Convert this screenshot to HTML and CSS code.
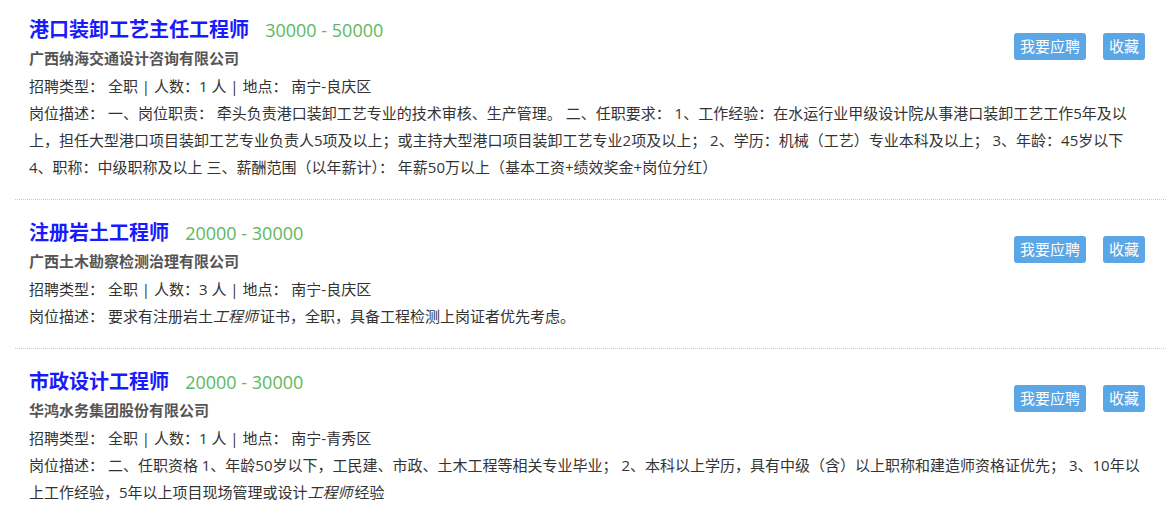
FILE: index.html
```html
<!DOCTYPE html>
<html lang="zh-CN">
<head>
  <meta charset="UTF-8">
  <title>招聘信息</title>
  <meta name="viewport" content="width=device-width, initial-scale=1.0">
  <link rel="stylesheet" href="styles.css">
</head>
<body>

  <main class="job-list">

    <div class="job">
      <div class="job-actions">
        <a class="btn" href="#">我要应聘</a>
        <a class="btn" href="#">收藏</a>
      </div>
      <h2 class="job-title">港口装卸工艺主任工程师 <span class="salary">30000 - 50000</span></h2>
      <p class="company">广西纳海交通设计咨询有限公司</p>
      <p class="info">招聘类型： 全职 | 人数：1 人 | 地点： 南宁-良庆区</p>
      <p class="desc">岗位描述： 一、岗位职责： 牵头负责港口装卸工艺专业的技术审核、生产管理。 二、任职要求： 1、工作经验：在水运行业甲级设计院从事港口装卸工艺工作5年及以上，担任大型港口项目装卸工艺专业负责人5项及以上；或主持大型港口项目装卸工艺专业2项及以上； 2、学历：机械（工艺）专业本科及以上； 3、年龄：45岁以下 4、职称：中级职称及以上 三、薪酬范围（以年薪计）： 年薪50万以上（基本工资+绩效奖金+岗位分红）</p>
    </div>

    <div class="job">
      <div class="job-actions">
        <a class="btn" href="#">我要应聘</a>
        <a class="btn" href="#">收藏</a>
      </div>
      <h2 class="job-title">注册岩土工程师 <span class="salary">20000 - 30000</span></h2>
      <p class="company">广西土木勘察检测治理有限公司</p>
      <p class="info">招聘类型： 全职 | 人数：3 人 | 地点： 南宁-良庆区</p>
      <p class="desc">岗位描述： 要求有注册岩土<em>工程师</em>证书，全职，具备工程检测上岗证者优先考虑。</p>
    </div>

    <div class="job">
      <div class="job-actions">
        <a class="btn" href="#">我要应聘</a>
        <a class="btn" href="#">收藏</a>
      </div>
      <h2 class="job-title">市政设计工程师 <span class="salary">20000 - 30000</span></h2>
      <p class="company">华鸿水务集团股份有限公司</p>
      <p class="info">招聘类型： 全职 | 人数：1 人 | 地点： 南宁-青秀区</p>
      <p class="desc">岗位描述： 二、任职资格 1、年龄50岁以下，工民建、市政、土木工程等相关专业毕业； 2、本科以上学历，具有中级（含）以上职称和建造师资格证优先； 3、10年以上工作经验，5年以上项目现场管理或设计<em>工程师</em>经验</p>
    </div>

  </main>

</body>
</html>
```

FILE: styles.css
```css
:root {
  --blue-title: #1a1aff;
  --green: #5cb85c;
  --btn-blue: #5ba6e5;
  --grey-text: #555;
  --font: "Open Sans", "Noto Sans CJK SC", sans-serif;
}

body {
  margin: 0;
  font-family: var(--font);
  font-size: 15px;
  color: #333;
  background-color: #fff;
}

.job-list {
  padding-left: 15px;
}

.job {
  padding: 19px 16px 18px 14px;
  border-top: 1px dotted #ccc;
}

.job:first-child {
  border-top: none;
  padding-top: 16px;
}

.job-actions {
  float: right;
  display: flex;
  gap: 17px;
  margin-top: 17px;
  margin-right: 5px;
}

.btn {
  display: inline-block;
  height: 27px;
  line-height: 27px;
  padding: 0 6px;
  background-color: var(--btn-blue);
  color: #fff;
  font-size: 15px;
  text-decoration: none;
  border-radius: 3px;
}

.job-title {
  margin: 0;
  font-size: 20px;
  line-height: 28px;
  font-weight: bold;
  color: var(--blue-title);
}

.salary {
  margin-left: 11px;
  font-size: 18px;
  font-weight: normal;
  color: var(--green);
}

.company {
  margin: 0;
  line-height: 28px;
  font-weight: bold;
  color: var(--grey-text);
}

.info {
  margin: 0;
  line-height: 28px;
}

.desc {
  margin: 0;
  line-height: 27px;
}

.desc em {
  margin-right: 2px;
}
```
